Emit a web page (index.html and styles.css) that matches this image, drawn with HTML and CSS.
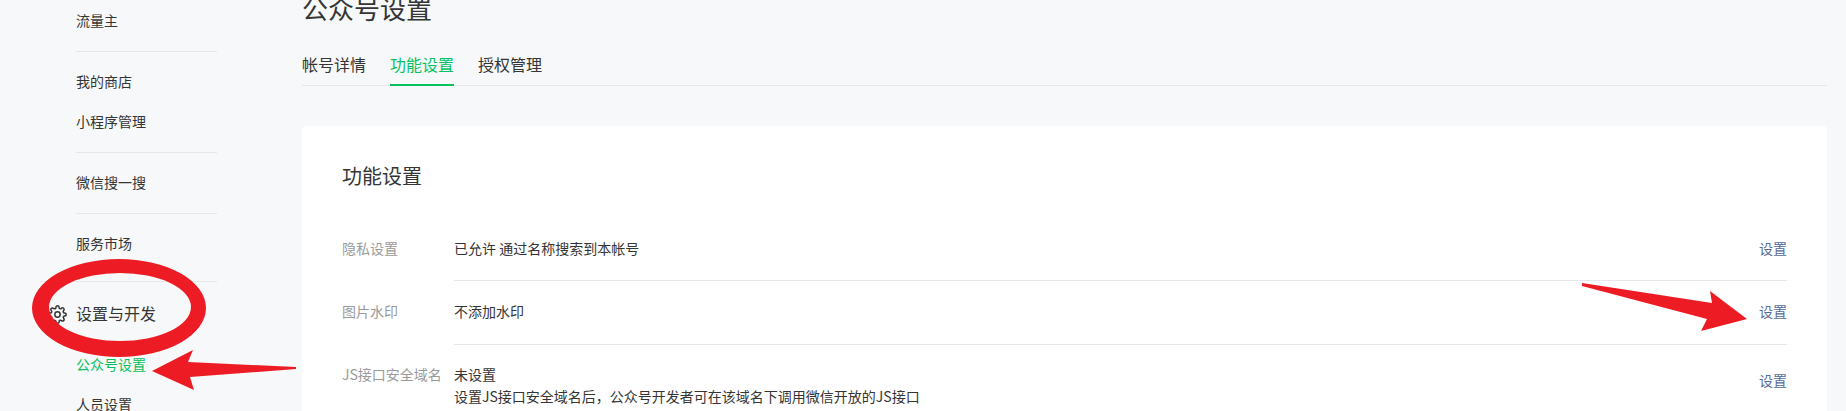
FILE: index.html
```html
<!DOCTYPE html>
<html lang="zh-CN">
<head>
<meta charset="utf-8">
<title>公众号设置</title>
<link rel="stylesheet" href="styles.css">
</head>
<body>
<div class="layout">
  <nav class="sidebar">
    <div class="group group-first"><a class="item">流量主</a></div>
    <div class="group"><a class="item">我的商店</a><a class="item">小程序管理</a></div>
    <div class="group"><a class="item">微信搜一搜</a></div>
    <div class="group"><a class="item">服务市场</a></div>
    <div class="section">
      <div class="section-head">
        <svg class="gear" viewBox="0 0 24 24" fill="none" stroke="#353535" stroke-width="1.9" stroke-linecap="round" stroke-linejoin="round"><circle cx="12" cy="12" r="3.4"/><path d="M19.4 15a1.65 1.65 0 0 0 .33 1.82l.06.06a2 2 0 0 1 0 2.83 2 2 0 0 1-2.83 0l-.06-.06a1.65 1.65 0 0 0-1.82-.33 1.65 1.65 0 0 0-1 1.51V21a2 2 0 0 1-2 2 2 2 0 0 1-2-2v-.09A1.65 1.65 0 0 0 9 19.4a1.65 1.65 0 0 0-1.82.33l-.06.06a2 2 0 0 1-2.83 0 2 2 0 0 1 0-2.83l.06-.06a1.65 1.65 0 0 0 .33-1.82 1.65 1.65 0 0 0-1.51-1H3a2 2 0 0 1-2-2 2 2 0 0 1 2-2h.09A1.65 1.65 0 0 0 4.6 9a1.65 1.65 0 0 0-.33-1.82l-.06-.06a2 2 0 0 1 0-2.83 2 2 0 0 1 2.83 0l.06.06a1.65 1.65 0 0 0 1.82.33H9a1.65 1.65 0 0 0 1-1.51V3a2 2 0 0 1 2-2 2 2 0 0 1 2 2v.09a1.65 1.65 0 0 0 1 1.51 1.65 1.65 0 0 0 1.82-.33l.06-.06a2 2 0 0 1 2.83 0 2 2 0 0 1 0 2.83l-.06.06a1.65 1.65 0 0 0-.33 1.82V9a1.65 1.65 0 0 0 1.51 1H21a2 2 0 0 1 2 2 2 2 0 0 1-2 2h-.09a1.65 1.65 0 0 0-1.51 1z"/></svg>
        <span>设置与开发</span>
      </div>
      <a class="item item-active">公众号设置</a>
      <a class="item">人员设置</a>
    </div>
  </nav>
  <main class="main">
    <h1 class="title">公众号设置</h1>
    <div class="tabs">
      <a class="tab">帐号详情</a>
      <a class="tab tab-active">功能设置</a>
      <a class="tab">授权管理</a>
    </div>
    <section class="card">
      <h2 class="card-title">功能设置</h2>
      <div class="row">
        <div class="label">隐私设置</div>
        <div class="row-body">
          <div class="value">已允许 通过名称搜索到本帐号</div>
          <a class="link">设置</a>
        </div>
      </div>
      <div class="row row-second">
        <div class="label">图片水印</div>
        <div class="row-body">
          <div class="value">不添加水印</div>
          <a class="link">设置</a>
        </div>
      </div>
      <div class="row row-third">
        <div class="label">JS接口安全域名</div>
        <div class="row-body">
          <div class="value">未设置<br>设置JS接口安全域名后，公众号开发者可在该域名下调用微信开放的JS接口</div>
          <a class="link">设置</a>
        </div>
      </div>
    </section>
  </main>
</div>
<svg class="marks" width="1846" height="411" viewBox="0 0 1846 411">
  <path fill="#ed1c24" fill-rule="evenodd" d="M32 308a87 49 0 1 0 174 0a87 49 0 1 0-174 0zM49 307a71 34 0 1 1 142 0a71 34 0 1 1-142 0z"/>
  <path fill="#ed1c24" d="M152 371L193 350L188 362L296 367L296 369L190 377L194 390z"/>
  <path fill="#ed1c24" d="M1582 283L1712 303L1710 291L1747 319L1701 331L1707 319L1582 286z"/>
</svg>
</body>
</html>
```

FILE: styles.css
```css
html, body {
  margin: 0;
  height: 411px;
  overflow: hidden;
  background: #f6f8f9;
}
body {
  position: relative;
  font-family: "Noto Sans CJK SC", "Noto Sans", sans-serif;
  font-size: 14px;
  color: #353535;
}
a { color: inherit; text-decoration: none; }

.layout {
  display: flex;
  margin-top: -8px;
  padding-right: 19px;
  height: 419px;
  overflow: hidden;
}

.sidebar {
  width: 302px;
  flex: none;
  padding-left: 40px;
  box-sizing: border-box;
  padding-right: 85px;
}
.group {
  margin-left: 36px;
  padding: 10px 0;
  border-bottom: 1px solid #e4e8eb;
  display: flex;
  flex-direction: column;
}
.group-first { padding-top: 9px; }
.group:nth-child(4) { margin-left: 0; padding-left: 36px; padding-bottom: 17px; }
.item {
  display: block;
  height: 40px;
  line-height: 38px;
  white-space: nowrap;
}
.section { padding-left: 36px; }
.section-head {
  position: relative;
  font-size: 16px;
  height: 63px;
  line-height: 63px;
}
.gear {
  position: absolute;
  left: -28px;
  top: 23px;
  width: 19px;
  height: 19px;
}
.item-active { color: #07c160; }

.main {
  flex: 1;
  min-width: 0;
}
.title {
  margin: 0;
  font-size: 26px;
  font-weight: 400;
  line-height: 32px;
  height: 36px;
}
.tabs {
  display: flex;
  gap: 24px;
  margin-top: 25px;
  border-bottom: 1px solid #e4e8eb;
  height: 32px;
}
.tab {
  font-size: 16px;
  line-height: 22px;
  height: 31px;
  border-bottom: 2px solid transparent;
}
.tab-active {
  color: #07c160;
  border-bottom-color: #07c160;
}

.card {
  margin-top: 40px;
  background: #fff;
  border-radius: 4px;
  padding: 0 40px;
}
.card-title {
  margin: 0;
  font-size: 20px;
  font-weight: 400;
  line-height: 28px;
  padding: 36px 0 26px;
}
.row { display: flex; }
.label {
  width: 112px;
  flex: none;
  color: #9a9a9a;
  line-height: 22px;
  padding-top: 21px;
}
.row-body {
  flex: 1;
  display: flex;
  justify-content: space-between;
  align-items: flex-start;
  padding: 21px 0;
  border-bottom: 1px solid #e4e8eb;
  line-height: 22px;
}
.link { color: #576b95; }
.row-second .label { padding-top: 19px; }
.row-second .row-body { padding-top: 19px; padding-bottom: 22px; }
.row-third .label { padding-top: 18px; }
.row-third .row-body { padding-top: 18px; }
.row-third .link { margin-top: 6px; }
.marks {
  position: absolute;
  left: 0;
  top: 0;
  pointer-events: none;
}
```
